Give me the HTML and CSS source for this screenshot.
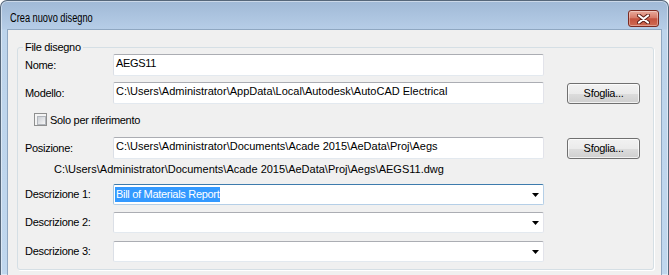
FILE: index.html
```html
<!DOCTYPE html>
<html lang="it">
<head>
    <meta charset="UTF-8">
    <title>Crea nuovo disegno</title>
    <link rel="stylesheet" href="styles.css">
</head>
<body>
    <div class="window">
        <div class="titlebar">
            <span class="title">Crea nuovo disegno</span>
            <button class="close" type="button">
                <svg width="13" height="10" viewBox="0 0 13 10">
                    <path d="M2 1.5 L11 8.5 M11 1.5 L2 8.5" stroke="#5b1d16" stroke-width="4" stroke-linecap="round"/>
                    <path d="M2 1.5 L11 8.5 M11 1.5 L2 8.5" stroke="#fff" stroke-width="2.2" stroke-linecap="round"/>
                </svg>
            </button>
        </div>

        <div class="client">
            <fieldset class="group">
                <legend>File disegno</legend>

                <div class="row">
                    <label>Nome:</label>
                    <div class="field">AEGS11</div>
                </div>

                <div class="row row-gap-6">
                    <label>Modello:</label>
                    <div class="field path">C:\Users\Administrator\AppData\Local\Autodesk\AutoCAD Electrical</div>
                    <button class="browse" type="button">Sfoglia...</button>
                </div>

                <div class="check-row">
                    <span class="check"></span>
                    <span>Solo per riferimento</span>
                </div>

                <div class="row row-gap-11">
                    <label>Posizione:</label>
                    <div class="field path">C:\Users\Administrator\Documents\Acade 2015\AeData\Proj\Aegs</div>
                    <button class="browse" type="button">Sfoglia...</button>
                </div>

                <div class="full-path path">C:\Users\Administrator\Documents\Acade 2015\AeData\Proj\Aegs\AEGS11.dwg</div>

                <div class="row row-gap-8">
                    <label>Descrizione 1:</label>
                    <div class="combo focused">
                        <span class="selected">Bill of Materials Report</span>
                        <svg class="arrow" width="7" height="4" viewBox="0 0 7 4"><polygon points="0,0 7,0 3.5,4" fill="#000"/></svg>
                    </div>
                </div>

                <div class="row row-gap-7">
                    <label>Descrizione 2:</label>
                    <div class="combo">
                        <span></span>
                        <svg class="arrow" width="7" height="4" viewBox="0 0 7 4"><polygon points="0,0 7,0 3.5,4" fill="#000"/></svg>
                    </div>
                </div>

                <div class="row row-gap-8">
                    <label>Descrizione 3:</label>
                    <div class="combo">
                        <span></span>
                        <svg class="arrow" width="7" height="4" viewBox="0 0 7 4"><polygon points="0,0 7,0 3.5,4" fill="#000"/></svg>
                    </div>
                </div>
            </fieldset>
        </div>
    </div>
</body>
</html>
```
FILE: styles.css
```css
* {
    box-sizing: border-box;
}
html, body {
    margin: 0;
}
body {
    width: 669px;
    height: 275px;
    overflow: hidden;
    background: #fff;
    font-family: 'Liberation Sans', Arial, sans-serif;
    font-size: 11px;
    letter-spacing: -0.3px;
    color: #000;
}
.window {
    height: 275px;
    display: flex;
    flex-direction: column;
    border: 1px solid #56677a;
    border-bottom: none;
    border-radius: 7px 7px 0 0;
    background: linear-gradient(to bottom, #a0b9d6 0, #b6cde7 28px, #bdd4eb 29px, #c0d7ee 100%);
    box-shadow: inset 0 0 0 1px rgba(255,255,255,0.45);
}
.titlebar {
    flex: none;
    height: 28px;
    display: flex;
    justify-content: space-between;
    align-items: flex-start;
    padding: 9px 9px 0 9px;
}
.title {
    font-size: 12px;
    letter-spacing: 0;
    line-height: 17px;
    transform: scaleX(0.77);
    transform-origin: left center;
}
.close {
    width: 31px;
    height: 17px;
    padding: 0;
    display: flex;
    align-items: center;
    justify-content: center;
    border: 1px solid #7a2a21;
    border-radius: 3px;
    background: linear-gradient(to bottom, #e8aa9c 0%, #d77b69 45%, #c4523e 52%, #cf6a52 100%);
    box-shadow: inset 0 0 0 1px rgba(255,255,255,0.35);
}
.client {
    flex: 1;
    margin: 0 6px;
    border: 1px solid #8fa7c1;
    border-bottom: none;
    background: #f0f0f0;
    padding: 0 7px 0 9px;
}
.group {
    margin: 11px 0 0;
    padding: 0 12px 7px 7px;
    border: 1px solid #d5dfe5;
    border-radius: 3px;
    box-shadow: 1px 1px 0 #fff;
    min-width: 0;
}
.group legend {
    padding: 0 2px;
    margin-left: -2px;
    line-height: 13px;
}
.row {
    display: flex;
    align-items: center;
}
.row label {
    flex: none;
    width: 88px;
    line-height: 13px;
}
.row-gap-6 { margin-top: 6px; }
.row-gap-7 { margin-top: 7px; }
.row-gap-8 { margin-top: 8px; }
.row-gap-11 { margin-top: 11px; }
.path {
    letter-spacing: 0;
}
.field {
    flex: none;
    width: 431px;
    height: 22px;
    padding: 1px 2px;
    line-height: 14px;
    white-space: nowrap;
    overflow: hidden;
    background: #fff;
    border: 1px solid;
    border-color: #abadb3 #e2e3ea #e3e9ef #dbdfe6;
    border-radius: 2px;
}
.browse {
    flex: none;
    width: 73px;
    height: 21px;
    margin-left: 23px;
    padding: 0;
    font: inherit;
    letter-spacing: inherit;
    color: #000;
    border: 1px solid #707070;
    border-radius: 3px;
    background: linear-gradient(to bottom, #f2f2f2 0%, #ebebeb 50%, #dddddd 51%, #cfcfcf 100%);
    box-shadow: inset 0 0 0 1px rgba(255,255,255,0.7);
}
.check-row {
    display: flex;
    align-items: center;
    gap: 3px;
    height: 13px;
    margin-top: 9px;
    padding-left: 9px;
}
.check {
    width: 13px;
    height: 13px;
    padding: 2px;
    border: 1px solid #8e8f8f;
    background: #f4f4f4;
}
.check::after {
    content: '';
    display: block;
    width: 7px;
    height: 7px;
    border: 1px solid #b2b6bc;
    background: linear-gradient(135deg, #cbcfd5, #f6f6f6);
}
.full-path {
    margin: 4px 0 0 29px;
    line-height: 13px;
}
.combo {
    flex: none;
    width: 431px;
    height: 21px;
    display: flex;
    align-items: center;
    justify-content: space-between;
    padding: 0 4px 0 1px;
    background: #fff;
    border: 1px solid;
    border-color: #abadb3 #e2e3ea #e3e9ef #dbdfe6;
    border-radius: 2px;
}
.combo.focused {
    border-color: #3d7bad #b5cfe7 #b5cfe7 #a4c6e0;
}
.selected {
    background: #3399ff;
    color: #fff;
    padding: 0 1px;
    line-height: 15px;
}
.arrow {
    display: block;
}
```
